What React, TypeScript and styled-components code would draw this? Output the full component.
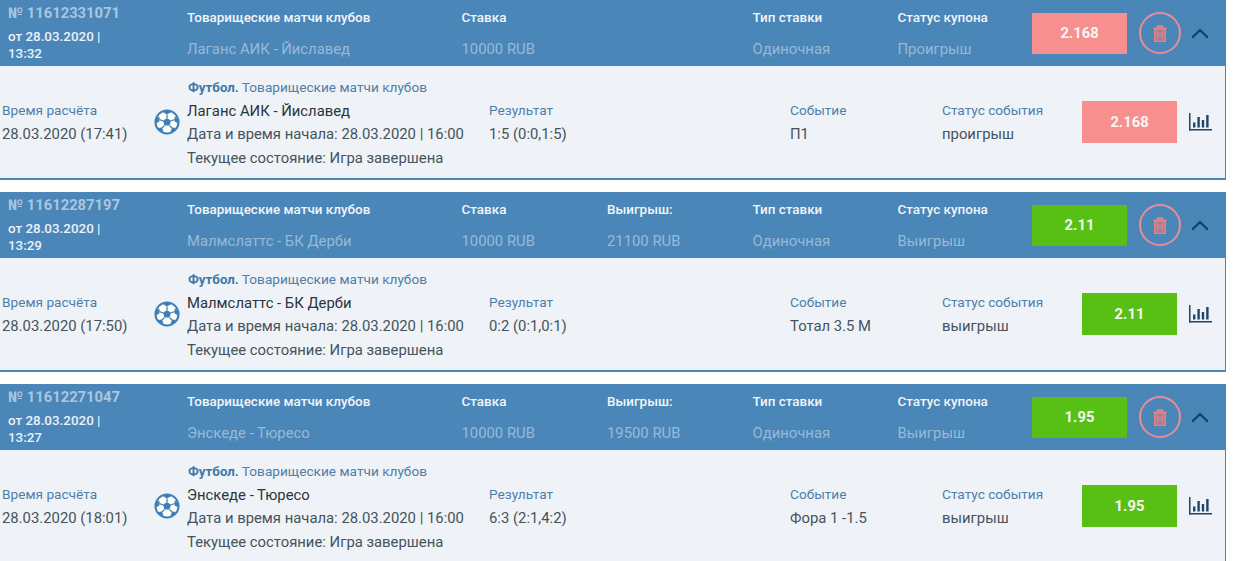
import React, { FC } from 'react';
import styled, { createGlobalStyle } from 'styled-components';

const GlobalStyle = createGlobalStyle`
  html, body {
    margin: 0;
    padding: 0;
    height: 561px;
    overflow: hidden;
    background: #fff;
    font-family: Roboto, 'Liberation Sans', sans-serif;
  }
`;

const List = styled.div`
  width: 1226px;
  display: flex;
  flex-direction: column;
  gap: 12px;
`;

const Card = styled.section`
  display: flex;
  flex-direction: column;
  border-bottom: 2px solid #4a86b8;
  border-right: 1px solid #4a86b8;
`;

const Header = styled.header`
  height: 66px;
  background: #4a86b8;
  display: grid;
  grid-template-columns: 187px 274.5px 145.5px 145.5px 145px 134.5px 107px 42px 1fr;
  align-items: center;
`;

const CouponCell = styled.div`
  padding: 4px 0 0 8px;
  align-self: start;
`;

const CouponNumber = styled.div`
  font-size: 14.8px;
  line-height: 18px;
  font-weight: 700;
  color: #a9c6de;
`;

const CouponDate = styled.div`
  margin-top: 6px;
  width: 112px;
  font-size: 13.4px;
  line-height: 17px;
  font-weight: 500;
  color: #eaf1f7;
`;

const HeadCell = styled.div`
  align-self: stretch;
  display: flex;
  flex-direction: column;
  justify-content: space-between;
  padding: 10px 0 8px;
`;

const HeadTitle = styled.div`
  font-size: 13.45px;
  line-height: 16px;
  font-weight: 500;
  color: #f0f5f9;
`;

const HeadValue = styled.div`
  font-size: 14.85px;
  line-height: 18px;
  color: #98bad6;
`;

const Coef = styled.div<{ $lost: boolean; $h: number }>`
  width: 95px;
  height: ${({ $h }) => $h}px;
  background: ${({ $lost }) => ($lost ? '#f78f8f' : '#58c015')};
  color: #f4f7f4;
  display: flex;
  align-items: center;
  justify-content: center;
  font-size: 14.8px;
  font-weight: 700;
`;

const TrashButton = styled.div`
  width: 38px;
  height: 38px;
  border: 2px solid #eb8e93;
  border-radius: 50%;
  display: flex;
  align-items: center;
  justify-content: center;
`;

const Chevron = styled.div`
  display: flex;
  justify-content: center;
  width: 38px;
`;

const Body = styled.div`
  height: 112px;
  background: #eff3f7;
  display: grid;
  grid-template-columns: 153px 34px 302px 301px 152px 140px 107px 1fr;
  align-items: center;
`;

const TimeCell = styled.div`
  padding-left: 2px;
`;

const Label = styled.div`
  font-size: 13.65px;
  line-height: 18px;
  color: #4f7ea8;
`;

const Value = styled.div`
  margin-top: 6px;
  font-size: 14.85px;
  line-height: 18px;
  color: #46525c;
`;

const MatchCell = styled.div`
  display: flex;
  flex-direction: column;
  gap: 5.5px;
`;

const League = styled.div`
  padding: 1px 0 0 1px;
  margin-bottom: -1px;
  font-size: 13.65px;
  line-height: 18px;
  color: #4f7ea8;
  b {
    font-weight: 700;
    font-size: 13.3px;
    color: #3f78a8;
  }
`;

const MatchLine = styled.div<{ $dark?: boolean }>`
  font-size: 14.85px;
  line-height: 18px;
  color: ${({ $dark }) => ($dark ? '#2a343d' : '#46525c')};
  white-space: nowrap;
`;

const BallWrap = styled.div`
  display: flex;
  margin-left: 1px;
`;

const Ball: FC = () => (
  <svg width="26" height="26" viewBox="0 0 28 28">
    <circle cx="14" cy="14" r="12.4" fill="#fff" stroke="#3f7fb5" strokeWidth="2.2" />
    <polygon points="14,9.6 18.3,12.7 16.7,17.8 11.3,17.8 9.7,12.7" fill="#3f7fb5" />
    <polygon points="14,1.6 19,3 14,6 9,3" fill="#3f7fb5" />
    <polygon points="26,10 26.4,15.5 22.4,13.6 22,8" fill="#3f7fb5" />
    <polygon points="2,10 1.6,15.5 5.6,13.6 6,8" fill="#3f7fb5" />
    <polygon points="7,24 4.2,20.5 8.4,20 10.6,24.6" fill="#3f7fb5" />
    <polygon points="21,24 23.8,20.5 19.6,20 17.4,24.6" fill="#3f7fb5" />
    <path d="M14 6v3.6M18.3 12.7l4.1-1.2M9.7 12.7l-4.1-1.2M11.3 17.8l-2.7 2.6M16.7 17.8l2.7 2.6" stroke="#3f7fb5" strokeWidth="1.3" />
  </svg>
);

const TrashIcon: FC = () => (
  <svg width="14" height="17" viewBox="0 0 14 17" fill="none" stroke="#f07f82" strokeWidth="1.6">
    <path d="M0.5 3.4h13" />
    <path d="M4.8 3.2V1h4.4v2.2" />
    <path d="M1.9 3.6h10.2v12.6H1.9z" fill="#f07f82" fillOpacity="0.45" />
    <path d="M5 6.3v7.4M9 6.3v7.4" />
  </svg>
);

const ChevronIcon: FC = () => (
  <svg width="18" height="11" viewBox="0 0 18 11" fill="none" stroke="#17406a" strokeWidth="2.2">
    <path d="M1.2 9.6L9 2l7.8 7.6" />
  </svg>
);

const ChartIcon: FC = () => (
  <svg width="23" height="18" viewBox="0 0 23 18" fill="#1f4568">
    <rect x="0" y="0" width="1.5" height="17.5" />
    <rect x="0" y="16" width="23" height="1.5" />
    <rect x="4" y="9.5" width="2.4" height="5" />
    <rect x="8.4" y="4" width="2.4" height="10.5" />
    <rect x="12.8" y="7" width="2.4" height="7.5" />
    <rect x="17.2" y="2" width="2.4" height="12.5" />
  </svg>
);

type Coupon = {
  id: string;
  date: string;
  match: string;
  payout?: string;
  coef: string;
  status: string;
  settled: string;
  score: string;
  event: string;
  eventStatus: string;
};

const coupons: Coupon[] = [
  {
    id: '11612331071',
    date: 'от 28.03.2020 | 13:32',
    match: 'Лаганс АИК - Йиславед',
    coef: '2.168',
    status: 'Проигрыш',
    settled: '28.03.2020 (17:41)',
    score: '1:5 (0:0,1:5)',
    event: 'П1',
    eventStatus: 'проигрыш',
  },
  {
    id: '11612287197',
    date: 'от 28.03.2020 | 13:29',
    match: 'Малмслаттс - БК Дерби',
    payout: '21100 RUB',
    coef: '2.11',
    status: 'Выигрыш',
    settled: '28.03.2020 (17:50)',
    score: '0:2 (0:1,0:1)',
    event: 'Тотал 3.5 М',
    eventStatus: 'выигрыш',
  },
  {
    id: '11612271047',
    date: 'от 28.03.2020 | 13:27',
    match: 'Энскеде - Тюресо',
    payout: '19500 RUB',
    coef: '1.95',
    status: 'Выигрыш',
    settled: '28.03.2020 (18:01)',
    score: '6:3 (2:1,4:2)',
    event: 'Фора 1 -1.5',
    eventStatus: 'выигрыш',
  },
];

const Head: FC<{ title?: string; value?: string }> = ({ title, value }) => (
  <HeadCell>
    {title && <HeadTitle>{title}</HeadTitle>}
    {value && <HeadValue>{value}</HeadValue>}
  </HeadCell>
);

const Info: FC<{ label: string; value: string }> = ({ label, value }) => (
  <div>
    <Label>{label}</Label>
    <Value>{value}</Value>
  </div>
);

const App: FC = () => (
  <List>
    <GlobalStyle />
    {coupons.map((c) => {
      const lost = c.status === 'Проигрыш';
      return (
        <Card key={c.id}>
          <Header>
            <CouponCell>
              <CouponNumber>№ {c.id}</CouponNumber>
              <CouponDate>{c.date}</CouponDate>
            </CouponCell>
            <Head title="Товарищеские матчи клубов" value={c.match} />
            <Head title="Ставка" value="10000 RUB" />
            {c.payout ? <Head title="Выигрыш:" value={c.payout} /> : <Head />}
            <Head title="Тип ставки" value="Одиночная" />
            <Head title="Статус купона" value={c.status} />
            <Coef $lost={lost} $h={41}>{c.coef}</Coef>
            <TrashButton><TrashIcon /></TrashButton>
            <Chevron><ChevronIcon /></Chevron>
          </Header>
          <Body>
            <TimeCell>
              <Label>Время расчёта</Label>
              <Value>{c.settled}</Value>
            </TimeCell>
            <BallWrap><Ball /></BallWrap>
            <MatchCell>
              <League><b>Футбол.</b> Товарищеские матчи клубов</League>
              <MatchLine $dark>{c.match}</MatchLine>
              <MatchLine>Дата и время начала: 28.03.2020 | 16:00</MatchLine>
              <MatchLine>Текущее состояние: Игра завершена</MatchLine>
            </MatchCell>
            <Info label="Результат" value={c.score} />
            <Info label="Событие" value={c.event} />
            <Info label="Статус события" value={c.eventStatus} />
            <Coef $lost={lost} $h={42}>{c.coef}</Coef>
            <ChartIcon />
          </Body>
        </Card>
      );
    })}
  </List>
);

export default App;
